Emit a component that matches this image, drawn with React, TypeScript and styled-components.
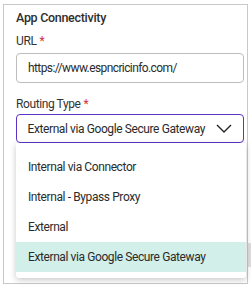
import React from 'react';
import styled, { createGlobalStyle } from 'styled-components';

const GlobalStyle = createGlobalStyle`
  html, body {
    margin: 0;
    padding: 0;
    background: #ffffff;
  }
  body {
    font-family: Roboto, "Noto Sans", Arial, sans-serif;
    color: #2b2b2b;
    letter-spacing: -0.4px;
  }
`;

const Page = styled.div`
  position: relative;
  width: 251px;
  height: 288px;
  padding: 4px 0 0 3px;
  box-sizing: border-box;
`;

const Frame = styled.div`
  position: relative;
  width: 245px;
  height: 280px;
  box-sizing: border-box;
  border: 1px solid #c9c9c9;
  padding: 3px 3px 0 12px;
  display: flex;
  flex-direction: column;
`;

const ScrollPeek = styled.div`
  position: absolute;
  left: 248px;
  top: 243px;
  width: 3px;
  height: 24px;
  background: #dedede;
`;

const Title = styled.div`
  font-size: 12.5px;
  font-weight: 500;
  letter-spacing: -0.3px;
  line-height: 20px;
  color: #2e2e2e;
`;

const Label = styled.div<{ $gap: number }>`
  margin-top: ${({ $gap }) => $gap}px;
  font-size: 12px;
  line-height: 18px;
  color: #333;
`;

const Required = styled.span`
  color: #d3323a;
  margin-left: 3px;
`;

const TextInput = styled.div`
  margin-top: 3px;
  height: 30px;
  box-sizing: border-box;
  border: 1px solid #bdbdbd;
  border-radius: 4px;
  padding: 0 11px;
  display: flex;
  align-items: center;
  font-size: 12px;
  letter-spacing: -0.6px;
  color: #2b2b2b;
`;

const SelectWrap = styled.div`
  position: relative;
  margin-top: 1px;
`;

const SelectBox = styled.div`
  height: 29px;
  box-sizing: border-box;
  border: 1.5px solid #5d34c4;
  border-radius: 4px;
  padding: 0 11px 0 10.5px;
  display: flex;
  align-items: center;
  justify-content: space-between;
  font-size: 12px;
  color: #2b2b2b;
  white-space: nowrap;

  svg {
    flex-shrink: 0;
  }
`;

const Menu = styled.ul`
  position: absolute;
  top: 100%;
  left: 0;
  right: -2px;
  margin: 0;
  padding: 9px 0 6px;
  list-style: none;
  background: #fff;
  box-shadow: 0 2px 6px rgba(0, 0, 0, 0.22);
  border-radius: 0 0 3px 3px;
  z-index: 2;
`;

const Option = styled.li<{ $active?: boolean }>`
  height: 30px;
  padding: 0 12px;
  display: flex;
  align-items: center;
  font-size: 12px;
  color: #2b2b2b;
  white-space: nowrap;
  background: ${({ $active }) => ($active ? '#d2efea' : 'transparent')};
`;

const Chevron = () => (
  <svg width="16" height="9" viewBox="0 0 16 9" fill="none">
    <path d="M1 1 L8 8 L15 1" stroke="#222" strokeWidth="1.4" strokeLinejoin="round" />
  </svg>
);

const options = [
  'Internal via Connector',
  'Internal - Bypass Proxy',
  'External',
  'External via Google Secure Gateway',
];

const App = () => {
  const selected = 'External via Google Secure Gateway';
  return (
    <Page>
      <GlobalStyle />
      <Frame>
        <Title>App Connectivity</Title>
        <Label $gap={4}>
          URL<Required>*</Required>
        </Label>
        <TextInput>https://www.espncricinfo.com/</TextInput>
        <Label $gap={12}>
          Routing Type<Required>*</Required>
        </Label>
        <SelectWrap>
          <SelectBox>
            <span>{selected}</span>
            <Chevron />
          </SelectBox>
          <Menu>
            {options.map((o) => (
              <Option key={o} $active={o === selected}>
                {o}
              </Option>
            ))}
          </Menu>
        </SelectWrap>
      </Frame>
      <ScrollPeek />
    </Page>
  );
};

export default App;
